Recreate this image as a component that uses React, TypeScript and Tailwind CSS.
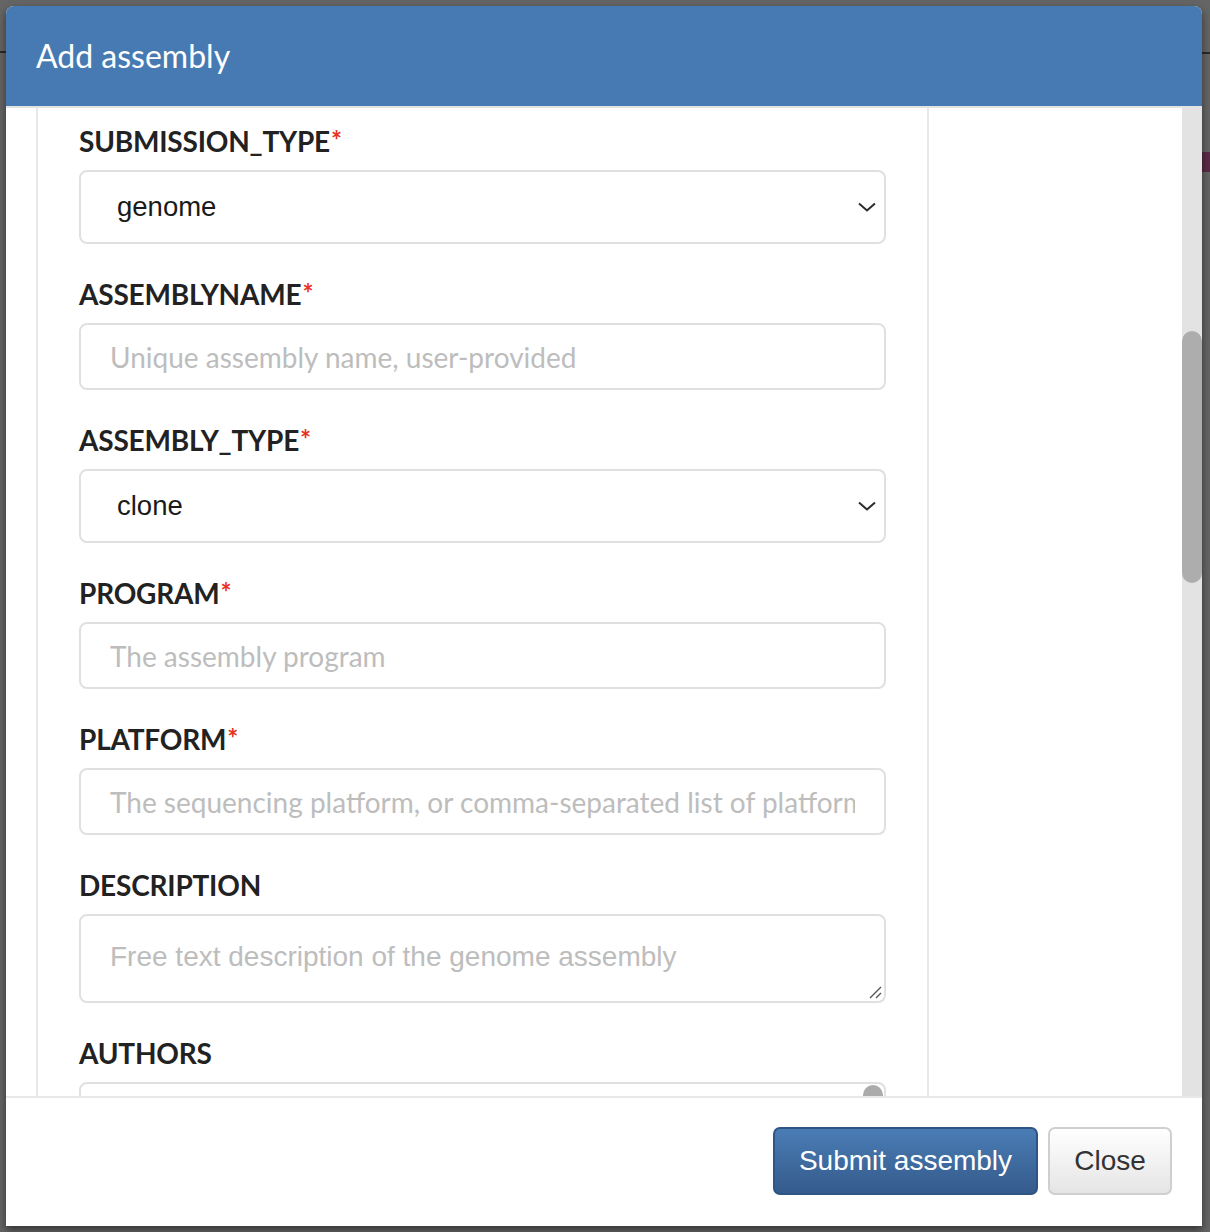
import React from "react";

const lato = "font-['Lato','Liberation_Sans',sans-serif]";
const helv = "font-['Liberation_Sans','Helvetica',Arial,sans-serif]";

function Label({ text, required }: { text: string; required?: boolean }) {
  return (
    <div className={`${lato} h-[36px] mb-[11px] flex items-center text-[28px] font-bold text-[#222] tracking-[-0.2px]`}>
      {text}
      {required && <span className="text-[#e8311f] text-[26px] self-start -mt-[2px] ml-[1px]">*</span>}
    </div>
  );
}

function Chevron() {
  return (
    <svg width="18" height="10" viewBox="0 0 18 10" className="absolute right-[8px] top-1/2 -translate-y-1/2">
      <path d="M1 1.5 L9 8.5 L17 1.5" fill="none" stroke="#2b2b2b" strokeWidth="2" />
    </svg>
  );
}

function SelectBox({ value }: { value: string }) {
  return (
    <div className="relative h-[74px] rounded-[8px] border-2 border-[#e0e0e0] bg-white flex items-center pl-[36px] mb-[32px]">
      <span className={`${helv} text-[27.5px] text-[#1a1a1a]`}>{value}</span>
      <Chevron />
    </div>
  );
}

function TextInput({ placeholder }: { placeholder: string }) {
  return (
    <div className="h-[67px] rounded-[8px] border-2 border-[#e0e0e0] bg-white flex items-center pl-[29px] pr-[29px] mb-[32px] overflow-hidden">
      <span className={`${lato} text-[28px] text-[#bdbdbd] whitespace-nowrap overflow-hidden`}>{placeholder}</span>
    </div>
  );
}

export default function App() {
  return (
    <div className="w-[1210px] h-[1232px] bg-[#656565] relative overflow-hidden">
      <div className="absolute left-0 top-[51px] w-[6px] h-[2px] bg-[#2a2a2a]" />
      <div className="absolute right-0 top-[52px] w-[8px] h-[2px] bg-[#2a2a2a]" />
      <div className="absolute right-0 top-[152px] w-[8px] h-[20px] bg-[#5a2a48]" />

      <div className="absolute left-[6px] top-[6px] w-[1196px] h-[1220px] bg-white rounded-t-[8px] flex flex-col shadow-[0_4px_8px_rgba(0,0,0,0.5)] overflow-hidden">
        {/* header */}
        <div className="h-[100px] bg-[#477ab2] flex items-center pl-[30px] shrink-0">
          <h1 className={`${lato} text-[32px] text-white`}>Add assembly</h1>
        </div>
        <div className="h-[2px] bg-[#e3e3e3] shrink-0" />

        {/* body */}
        <div className="h-[988px] flex shrink-0 overflow-hidden">
          <div className="flex-1 pl-[30px] overflow-hidden">
            <div className="w-[893px] h-full border-l-2 border-r-2 border-[#e8e8e8] px-[41px] pt-[15px]">
              <Label text="SUBMISSION_TYPE" required />
              <SelectBox value="genome" />
              <Label text="ASSEMBLYNAME" required />
              <TextInput placeholder="Unique assembly name, user-provided" />
              <Label text="ASSEMBLY_TYPE" required />
              <SelectBox value="clone" />
              <Label text="PROGRAM" required />
              <TextInput placeholder="The assembly program" />
              <Label text="PLATFORM" required />
              <TextInput placeholder="The sequencing platform, or comma-separated list of platforms" />
              <Label text="DESCRIPTION" />
              <div className="relative h-[89px] rounded-[8px] border-2 border-[#e0e0e0] bg-white pl-[29px] pt-[20px] mb-[32px]">
                <span className={`${helv} text-[28px] text-[#bdbdbd]`}>Free text description of the genome assembly</span>
                <svg width="14" height="14" viewBox="0 0 14 14" className="absolute right-[2px] bottom-[2px]">
                  <path d="M13 2 L2 13 M13 8 L8 13" stroke="#555" strokeWidth="1.4" />
                </svg>
              </div>
              <Label text="AUTHORS" />
              <div className="relative h-[67px] rounded-[8px] border-2 border-[#e0e0e0] bg-white">
                <div className="absolute right-[1px] top-[1px] w-[20px] h-[20px] rounded-full bg-[#ababab]" />
              </div>
            </div>
          </div>
          <div className="w-[20px] bg-[#e3e3e3] relative shrink-0">
            <div className="absolute left-0 top-[223px] w-[20px] h-[252px] rounded-full bg-[#adadad]" />
          </div>
        </div>

        {/* footer */}
        <div className="flex-1 border-t-2 border-[#e8e8e8] flex justify-end items-start pt-[29px] pr-[30px] gap-[10px]">
          <button className={`${helv} h-[68px] w-[265px] rounded-[7px] border-2 border-[#2f5486] bg-gradient-to-b from-[#4a7db5] to-[#355b8c] text-white text-[28px]`}>
            Submit assembly
          </button>
          <button className={`${helv} h-[68px] w-[124px] rounded-[7px] border-2 border-[#cfcfcf] bg-gradient-to-b from-white to-[#e5e5e5] text-[#333] text-[28px]`}>
            Close
          </button>
        </div>
      </div>
    </div>
  );
}
